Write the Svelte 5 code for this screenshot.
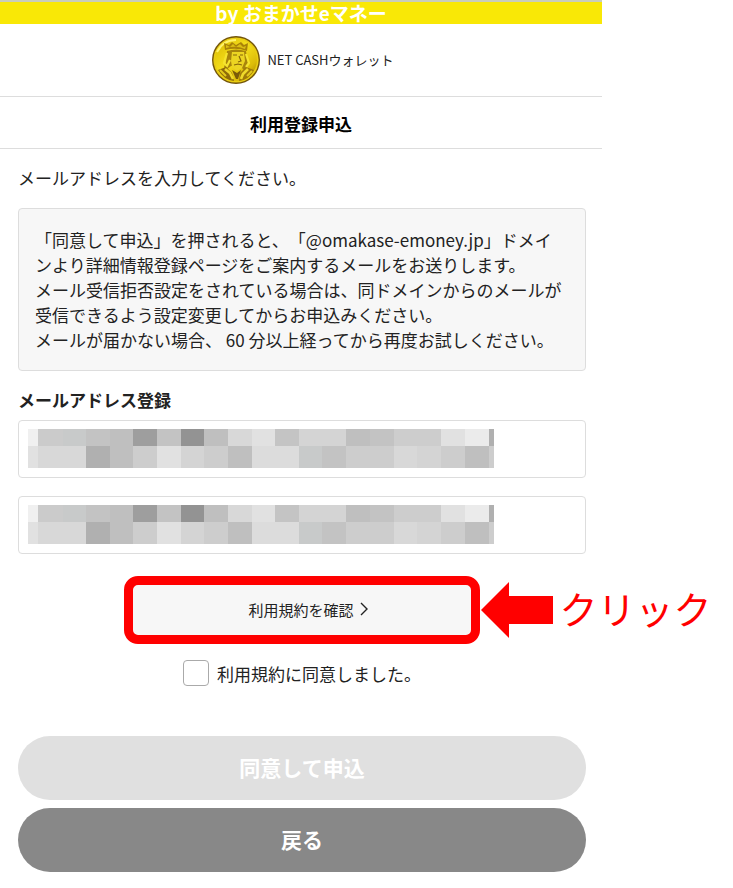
<script lang="ts">
  let email = $state('');
  let emailConfirm = $state('');
  let agreed = $state(false);

  // x positions of the mosaic columns: a narrow one at each end
  const edges = [0, 10, 35, 58, 82, 105, 129, 153, 176, 200, 224, 247, 271, 294, 318, 342, 366, 389, 413, 437, 461, 466];

  const mosaic = [
    ['#f0f0f0', '#cbcbcb', '#c8caca', '#c3c3c3', '#bfbfbf', '#9e9e9e', '#c3c3c3', '#939393', '#bfbfbf', '#d8d8d8', '#e1e1e1', '#c4c4c4', '#d4d4d4', '#d4d4d4', '#bfbfbf', '#c3c3c3', '#cdcdcd', '#cdcdcd', '#e1e1e1', '#ebebeb', '#b0b0b0'],
    ['#e1e1e1', '#d8d8d8', '#d8d8d8', '#b0b0b0', '#bfbfbf', '#cdcdcd', '#e1e1e1', '#d4d4d4', '#cdcdcd', '#bfbfbf', '#dcdcdc', '#dcdcdc', '#c8caca', '#c3c3c3', '#cdcdcd', '#cdcdcd', '#d8d8d8', '#d4d4d4', '#cdcdcd', '#bfbfbf', '#cdcdcd']
  ];
</script>

{#snippet mask()}
  <svg class="mask" viewBox="0 0 466 39" preserveAspectRatio="none" shape-rendering="crispEdges" aria-hidden="true">
    {#each mosaic as row, r}
      {#each row as color, c}
        <rect x={edges[c]} y={r * 17} width={edges[c + 1] - edges[c]} height={r ? 22 : 17} fill={color} />
      {/each}
    {/each}
  </svg>
{/snippet}

<div class="page">
  <div class="banner">by おまかせeマネー</div>

  <header class="brand">
    <svg class="coin" viewBox="0 0 48 48" aria-hidden="true">
      <defs>
        <linearGradient id="gold" x1="0" y1="0" x2="1" y2="1">
          <stop offset="0" stop-color="#d9b900" />
          <stop offset="0.45" stop-color="#f5df1c" />
          <stop offset="0.75" stop-color="#dcbc08" />
          <stop offset="1" stop-color="#9a7605" />
        </linearGradient>
      </defs>
      <circle cx="24" cy="24" r="24" fill="#73550a" />
      <circle cx="24" cy="24" r="22.6" fill="#e9cd12" />
      <circle cx="24" cy="24" r="21" fill="url(#gold)" />
      <path d="M5 16C9 8 16 4 24 4" fill="none" stroke="#fff36a" stroke-width="2" />
      <!-- crown -->
      <path d="M13 14L12 7L17 9L20 6L24 9L29 6L32 9L36 7L35 15Q24 11 13 14Z" fill="#a98208" />
      <path d="M14 12L14 9L18 11L21 8L24 11L28 8L31 11L34 10L33 13Q24 9 14 12Z" fill="#dcbf14" />
      <!-- hair and face -->
      <path d="M15 15Q24 12 34 15L36 28L32 34L28 30H19L14 34L12 31L14 26Z" fill="#a8840c" />
      <path d="M20 16H32L33 25L30 32L25 35L20 31L19 25Z" fill="#ecd422" />
      <path d="M21 19L25 19M28 19L31 19M27 20L29 25L26 26M22 29L26 28L30 29" fill="none" stroke="#86640a" stroke-width="1.2" />
      <path d="M15 17L12 27L15 30L18 24M34 18L37 27L34 31" fill="none" stroke="#f5e42f" stroke-width="2.2" />
      <!-- cloak -->
      <path d="M6 34L14 31L20 37L22 45Q12 44 6 34Z" fill="#8f6b09" />
      <path d="M42 34L34 31L28 37L27 45Q37 44 42 34Z" fill="#a07a08" />
      <path d="M13 33L18 37L21 43M36 33L31 38L29 43" fill="none" stroke="#efd92a" stroke-width="2.6" />
      <path d="M8 34L14 40M40 35L35 40" fill="none" stroke="#e3c81d" stroke-width="2" />
      <path d="M20 34L25 37L29 34L26 43H24Z" fill="#7b5b09" />
    </svg>
    <span>NET CASHウォレット</span>
  </header>

  <h1>利用登録申込</h1>

  <form onsubmit={(e) => e.preventDefault()}>
    <p class="lead">メールアドレスを入力してください。</p>

    <div class="notice">
      「同意して申込」を押されると、「@omakase-emoney.jp」ドメインより詳細情報登録ページをご案内するメールをお送りします。<br />
      メール受信拒否設定をされている場合は、同ドメインからのメールが受信できるよう設定変更してからお申込みください。<br />
      メールが届かない場合、 60 分以上経ってから再度お試しください。
    </div>

    <label class="field-label" for="email">メールアドレス登録</label>
    <div class="field">
      <input id="email" type="email" bind:value={email} />
      {@render mask()}
    </div>
    <div class="field">
      <input type="email" aria-label="メールアドレス登録" bind:value={emailConfirm} />
      {@render mask()}
    </div>

    <div class="terms">
      <button class="terms-btn" type="button">
        利用規約を確認
        <svg viewBox="0 0 8 14" fill="none" stroke="currentColor" stroke-width="1.4" aria-hidden="true">
          <path d="M1 1L7 7L1 13" />
        </svg>
      </button>
      <div class="highlight"></div>
      <div class="callout">
        <svg viewBox="0 0 72 56" aria-hidden="true">
          <path d="M0 28L28 0V14H72V42H28V56Z" fill="#f00" />
        </svg>
        <span>クリック</span>
      </div>
    </div>

    <label class="agree">
      <input type="checkbox" bind:checked={agreed} />
      利用規約に同意しました。
    </label>

    <button class="action submit" type="submit">同意して申込</button>
    <button class="action back" type="button">戻る</button>
  </form>
</div>

<style>
  :global(body) {
    margin: 0;
    background: #fff;
  }

  .page {
    /* space on the right is for the callout */
    margin-right: 131px;
    color: #222;
    font-family: 'Noto Sans CJK JP', sans-serif;
    font-size: 17px;
    line-height: 25px;
    text-spacing-trim: space-all;
  }

  .banner {
    border-top: 2px solid #c9cdbb;
    background: #f9e806;
    color: #fff;
    font-size: 19px;
    font-weight: 700;
    line-height: 22px;
    text-align: center;
  }

  .brand {
    display: flex;
    align-items: center;
    justify-content: center;
    gap: 7px;
    padding: 12px 0 12px 4px;
    border-bottom: 1px solid #ddd;
    font-size: 13px;
    line-height: 24px;
  }

  .coin {
    width: 48px;
    height: 48px;
  }

  h1 {
    margin: 0;
    padding: 14px 0 12px;
    border-bottom: 1px solid #ddd;
    color: #000;
    font-size: 17px;
    font-weight: 700;
    line-height: 25px;
    text-align: center;
  }

  form {
    display: flex;
    flex-direction: column;
    padding: 16px 16px 16px 18px;
  }

  .lead {
    margin: 0 0 18px;
  }

  .notice {
    margin-bottom: 16px;
    padding: 18px 20px 18px 16px;
    border: 1px solid #ddd;
    border-radius: 4px;
    background: #f7f7f7;
  }

  .field-label {
    margin-bottom: 8px;
    font-weight: 700;
  }

  .field {
    position: relative;
    margin-bottom: 18px;
  }

  .field input {
    display: block;
    box-sizing: border-box;
    width: 100%;
    height: 58px;
    padding: 0 10px;
    border: 1px solid #ddd;
    border-radius: 4px;
    background: #fff;
    font: inherit;
  }

  .mask {
    position: absolute;
    top: 9px;
    left: 10px;
    width: 82%;
    height: 39px;
    pointer-events: none;
  }

  .terms {
    position: relative;
    align-self: center;
    width: 60%;
    margin: 12px 0 24px;
  }

  .terms-btn {
    display: flex;
    align-items: center;
    justify-content: center;
    gap: 6px;
    width: 100%;
    height: 52px;
    padding: 0 0 2px 12px;
    border: 1px solid #ddd;
    border-radius: 4px;
    background: #f7f7f7;
    color: #222;
    font-family: inherit;
    font-size: 15px;
    cursor: pointer;
  }

  .terms-btn svg {
    width: 8px;
    height: 14px;
  }

  .highlight {
    position: absolute;
    inset: -8px;
    border: 9px solid #f00;
    border-radius: 14px;
    pointer-events: none;
  }

  .callout {
    position: absolute;
    top: 0;
    bottom: 0;
    left: 100%;
    display: flex;
    align-items: center;
    gap: 6px;
    margin-left: 9px;
    color: #f00;
    font-size: 38px;
    line-height: 52px;
    white-space: nowrap;
  }

  .callout svg {
    width: 72px;
    height: 56px;
  }

  .callout span {
    padding-bottom: 4px;
  }

  .agree {
    display: flex;
    align-items: center;
    align-self: center;
    gap: 8px;
    margin-bottom: 50px;
  }

  .agree input {
    appearance: none;
    box-sizing: border-box;
    width: 26px;
    height: 26px;
    margin: 0;
    border: 1px solid #aaa;
    border-radius: 4px;
    background: #fff;
  }

  .agree input:checked {
    background: #888;
  }

  .action {
    height: 64px;
    padding: 0 0 3px;
    border: none;
    border-radius: 32px;
    color: #fff;
    font-family: inherit;
    font-size: 21px;
    font-weight: 700;
    cursor: pointer;
  }

  .submit {
    margin-bottom: 8px;
    background: #e0e0e0;
  }

  .back {
    background: #888;
  }
</style>
